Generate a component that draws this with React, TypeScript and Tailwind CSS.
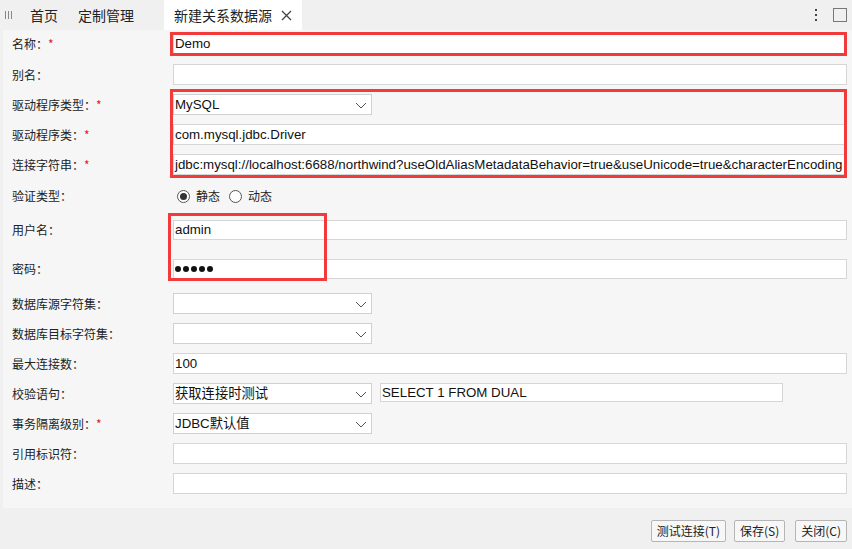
import React from 'react';

const cjk = { fontFamily: '"Noto Sans CJK SC", "Liberation Sans", sans-serif' };
const latin = { fontFamily: '"Liberation Sans", "Noto Sans CJK SC", sans-serif' };

function Chevron() {
  return (
    <svg width="12" height="7" viewBox="0 0 12 7" className="absolute right-[4px] top-[7px]">
      <polyline points="1,1 6,6 11,1" fill="none" stroke="#555" strokeWidth="1" />
    </svg>
  );
}

function TextBox({ value = '', className = 'w-[674px]', h = 'h-[21px]' }: { value?: string; className?: string; h?: string }) {
  return (
    <div
      className={`${className} ${h} bg-white border border-[#d6d6d6] flex items-center pl-[1px] text-[13.3px] text-[#111] overflow-hidden whitespace-nowrap`}
      style={latin}
    >
      {value}
    </div>
  );
}

function SelectBox({ value = '' }: { value?: string }) {
  return (
    <div
      className="relative w-[199px] h-[21px] bg-white border border-[#d0d0d0] flex items-center pl-[1px] text-[13.3px] text-[#111] whitespace-nowrap"
      style={latin}
    >
      {value}
      <Chevron />
    </div>
  );
}

function Row({ label, required, children, className = '' }: { label: string; required?: boolean; children: React.ReactNode; className?: string }) {
  return (
    <div className={`flex items-center ${className}`}>
      <div className="w-[170px] pl-[9px] text-[12px] text-[#222] leading-none" style={cjk}>
        {label}：{required && <span className="text-[#e02020]">*</span>}
      </div>
      {children}
    </div>
  );
}

function Radio({ checked, label }: { checked?: boolean; label: string }) {
  return (
    <div className="flex items-center gap-[6px]">
      <div className="w-[13px] h-[13px] rounded-full border border-[#555] bg-white flex items-center justify-center">
        {checked && <div className="w-[7px] h-[7px] rounded-full bg-[#333]" />}
      </div>
      <span className="text-[12px] text-[#222]" style={cjk}>{label}</span>
    </div>
  );
}

export default function App() {
  return (
    <div className="relative w-[852px] h-[549px] bg-[#f0f0f0] overflow-hidden" style={cjk}>
      {/* Tab bar */}
      <div className="h-[30px] flex items-stretch text-[14px] text-[#222]">
        <div className="w-[30px] flex items-center pl-[5px] gap-[2px]">
          <div className="w-[1px] h-[8px] bg-[#888]" />
          <div className="w-[1px] h-[8px] bg-[#888]" />
          <div className="w-[1px] h-[8px] bg-[#888]" />
        </div>
        <div className="flex items-center pr-[20px]">首页</div>
        <div className="flex items-center">定制管理</div>
        <div className="ml-[30px] w-[138px] bg-white flex items-center pl-[10px] gap-[9px]">
          <span>新建关系数据源</span>
          <svg width="11" height="11" viewBox="0 0 11 11">
            <path d="M1 1L10 10M10 1L1 10" stroke="#444" strokeWidth="1.3" />
          </svg>
        </div>
        <div className="flex-1" />
        <div className="flex flex-col justify-center gap-[3px] mr-[16px]">
          <div className="w-[2px] h-[2px] bg-[#444]" />
          <div className="w-[2px] h-[2px] bg-[#444]" />
          <div className="w-[2px] h-[2px] bg-[#444]" />
        </div>
        <div className="flex items-center mr-[5px]">
          <div className="w-[14px] h-[14px] border border-[#777]" />
        </div>
      </div>

      {/* Form panel */}
      <div className="ml-[3px] h-[478px] bg-[#f6f6f6] pt-[3px] flex flex-col gap-[9px]">
        <Row label="名称" required>
          <TextBox value="Demo" />
        </Row>
        <Row label="别名" className="mt-[1px]">
          <TextBox />
        </Row>
        <Row label="驱动程序类型" required>
          <SelectBox value="MySQL" />
        </Row>
        <Row label="驱动程序类" required>
          <TextBox value="com.mysql.jdbc.Driver" />
        </Row>
        <Row label="连接字符串" required>
          <TextBox value="jdbc:mysql://localhost:6688/northwind?useOldAliasMetadataBehavior=true&useUnicode=true&characterEncoding" />
        </Row>
        <Row label="验证类型" className="h-[20px] mt-[2px]">
          <div className="flex items-center gap-[9px] pl-[4px]">
            <Radio checked label="静态" />
            <Radio label="动态" />
          </div>
        </Row>
        <Row label="用户名" className="mt-[5px]">
          <TextBox value="admin" h="h-[20px]" />
        </Row>
        <Row label="密码" className="mt-[10px]">
          <div className="w-[674px] h-[20px] bg-white border border-[#d6d6d6] flex items-center pl-[1px] gap-[2px]">
            {[0, 1, 2, 3, 4].map(i => (
              <div key={i} className="w-[6px] h-[6px] rounded-full bg-[#111]" />
            ))}
          </div>
        </Row>
        <Row label="数据库源字符集" className="mt-[5px]">
          <SelectBox />
        </Row>
        <Row label="数据库目标字符集">
          <SelectBox />
        </Row>
        <Row label="最大连接数">
          <TextBox value="100" h="h-[21px]" />
        </Row>
        <Row label="校验语句">
          <SelectBox value="获取连接时测试" />
          <div className="ml-[8px] w-[403px] h-[19px] bg-white border border-[#d6d6d6] flex items-center pl-[1px] text-[13.3px] text-[#111] self-start" style={latin}>
            SELECT 1 FROM DUAL
          </div>
        </Row>
        <Row label="事务隔离级别" required>
          <SelectBox value="JDBC默认值" />
        </Row>
        <Row label="引用标识符">
          <TextBox h="h-[21px]" />
        </Row>
        <Row label="描述">
          <TextBox h="h-[21px]" />
        </Row>
      </div>

      {/* Footer */}
      <div className="flex justify-end items-center gap-[8px] pr-[5px] pt-[12px] text-[12px] text-[#222]" style={cjk}>
        {['测试连接(T)', '保存(S)', '关闭(C)'].map((t, i) => (
          <div
            key={t}
            className={`h-[22px] px-[5px] flex items-center bg-[#f7f7f7] border border-[#b5b5b5] rounded-[2px] ${i === 2 ? 'ml-[2px]' : ''}`}
          >
            {t}
          </div>
        ))}
      </div>

      {/* Red annotation boxes */}
      <div className="absolute left-[170px] top-[32px] w-[677px] h-[24px] border-[3px] border-[#f23a3a] pointer-events-none" />
      <div className="absolute left-[170px] top-[89px] w-[677px] h-[89px] border-[3px] border-[#f23a3a] pointer-events-none" />
      <div className="absolute left-[168px] top-[213px] w-[159px] h-[68px] border-[3px] border-[#f23a3a] pointer-events-none" />
    </div>
  );
}
